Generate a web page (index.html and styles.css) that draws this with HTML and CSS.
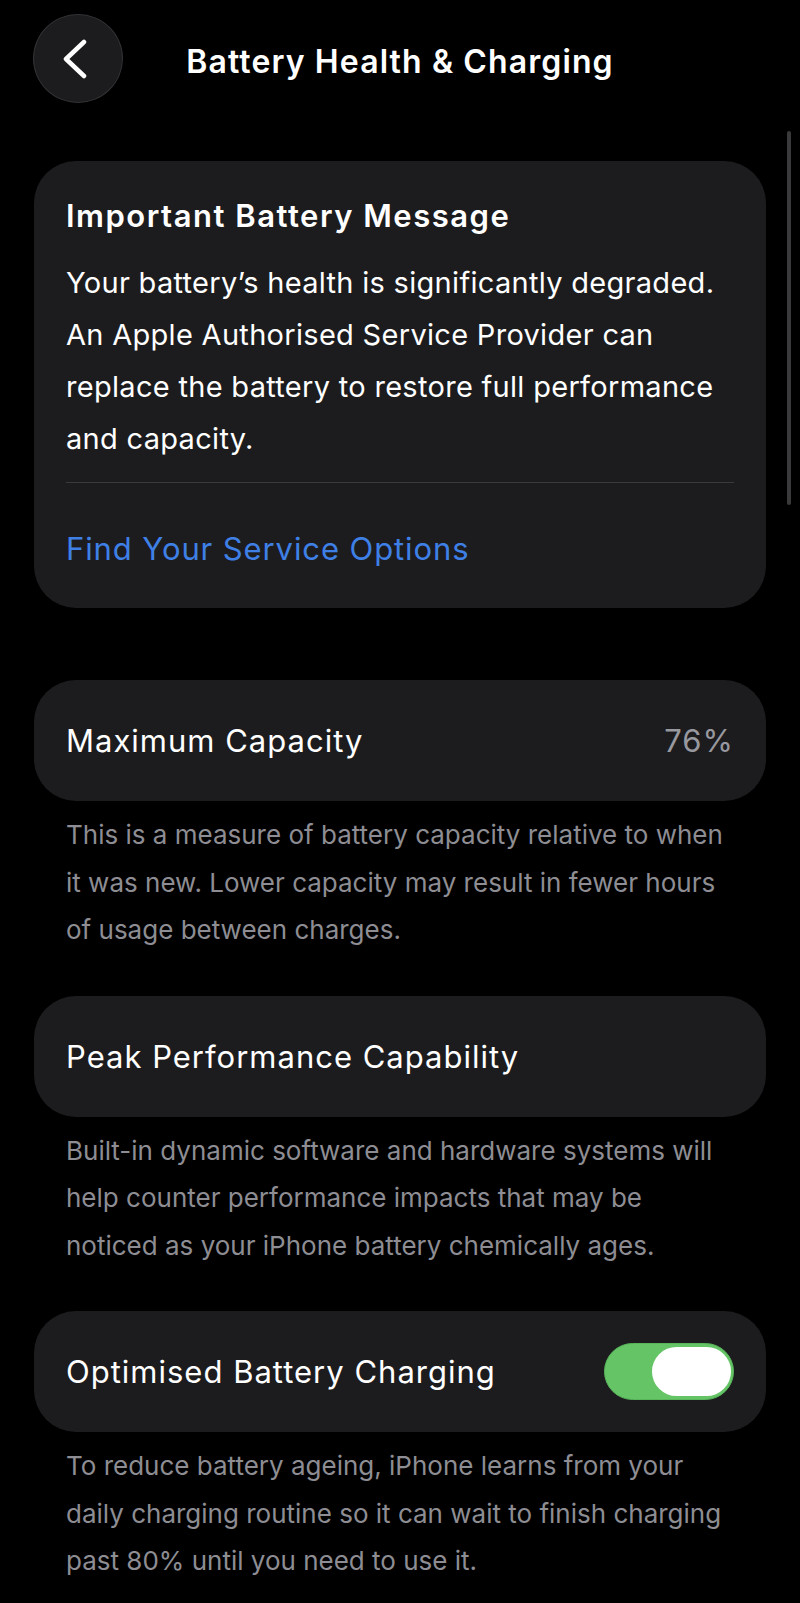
FILE: index.html
```html
<!DOCTYPE html>
<html lang="en">

<head>
    <meta charset="UTF-8" />
    <meta name="viewport" content="width=device-width, initial-scale=1.0" />
    <title>Battery Health &amp; Charging</title>
    <link rel="stylesheet" href="styles.css">
</head>

<body>
    <header class="nav">
        <button class="back" aria-label="Back">
            <svg width="30" height="40" viewBox="0 0 30 40">
                <path d="M24 3 L6 20 L24 37" fill="none" stroke="#fff" stroke-width="4.5" stroke-linecap="round" stroke-linejoin="round" />
            </svg>
        </button>
        <h1>Battery Health &amp; Charging</h1>
    </header>

    <main>
        <section class="card message">
            <h2>Important Battery Message</h2>
            <p>Your battery’s health is significantly degraded. An Apple Authorised Service Provider can replace the battery to restore full performance and capacity.</p>
            <hr>
            <a class="link" href="#">Find Your Service Options</a>
        </section>

        <section class="card row">
            <span>Maximum Capacity</span>
            <span class="value">76%</span>
        </section>
        <p class="note">This is a measure of battery capacity relative to when it was new. Lower capacity may result in fewer hours of usage between charges.</p>

        <section class="card row">
            <span>Peak Performance Capability</span>
        </section>
        <p class="note">Built-in dynamic software and hardware systems will help counter performance impacts that may be noticed as your iPhone battery chemically ages.</p>

        <section class="card row">
            <span>Optimised Battery Charging</span>
            <div class="toggle on"><div class="knob"></div></div>
        </section>
        <p class="note">To reduce battery ageing, iPhone learns from your daily charging routine so it can wait to finish charging past 80% until you need to use it.</p>
    </main>

    <div class="scrollbar"></div>
</body>

</html>
```

FILE: styles.css
```css
html,
body {
    margin: 0;
    background: #000;
    color: #fff;
    font-family: Inter, "Liberation Sans", sans-serif;
}

body {
    width: 800px;
    min-height: 1603px;
    position: relative;
}

.nav {
    height: 161px;
    position: relative;
}

.back {
    position: absolute;
    left: 33px;
    top: 14px;
    width: 90px;
    height: 89px;
    border-radius: 50%;
    background: #1c1c1e;
    border: 1px solid #333336;
    display: flex;
    align-items: center;
    justify-content: center;
    padding: 0 6px 0 0;
    box-sizing: border-box;
}

.nav h1 {
    margin: 0;
    padding-top: 40px;
    text-align: center;
    font-size: 32px;
    font-weight: 600;
    letter-spacing: 1.1px;
    line-height: 44px;
}

main {
    padding: 0 34px;
}

.card {
    background: #1c1c1e;
    border-radius: 42px;
    padding: 0 32px;
    font-size: 31px;
    letter-spacing: 1px;
}

.message {
    padding-top: 35px;
    padding-bottom: 33px;
    margin-bottom: 72px;
}

.message h2 {
    margin: 0;
    font-size: 31px;
    font-weight: 600;
    letter-spacing: 1.5px;
    line-height: 40px;
}

.message p {
    margin: 21px 0 0;
    line-height: 52px;
    font-size: 29px;
    letter-spacing: 0.3px;
}

.message hr {
    margin: 17px 0 0;
    border: 0;
    height: 1px;
    background: #3a3a3c;
}

.link {
    display: block;
    padding-top: 40px;
    line-height: 52px;
    color: #3f80e6;
    text-decoration: none;
    font-size: 31px;
    letter-spacing: 0.9px;
}

.row {
    height: 121px;
    display: flex;
    align-items: center;
    justify-content: space-between;
}

.value {
    color: #98989f;
}

.note {
    margin: 10px 0 42px;
    padding: 0 32px;
    color: #8d8d93;
    font-size: 26px;
    line-height: 47.5px;
}

.toggle {
    width: 130px;
    height: 57px;
    border-radius: 29px;
    background: #65c466;
    border: 1px solid #58b55a;
    display: flex;
    align-items: center;
    justify-content: flex-end;
    padding: 0 2px;
    box-sizing: border-box;
}

.knob {
    width: 79px;
    height: 49px;
    border-radius: 25px;
    background: #fff;
}

.scrollbar {
    position: absolute;
    right: 9px;
    top: 131px;
    width: 4px;
    height: 374px;
    border-radius: 2px;
    background: #3a3a3c;
}
```
